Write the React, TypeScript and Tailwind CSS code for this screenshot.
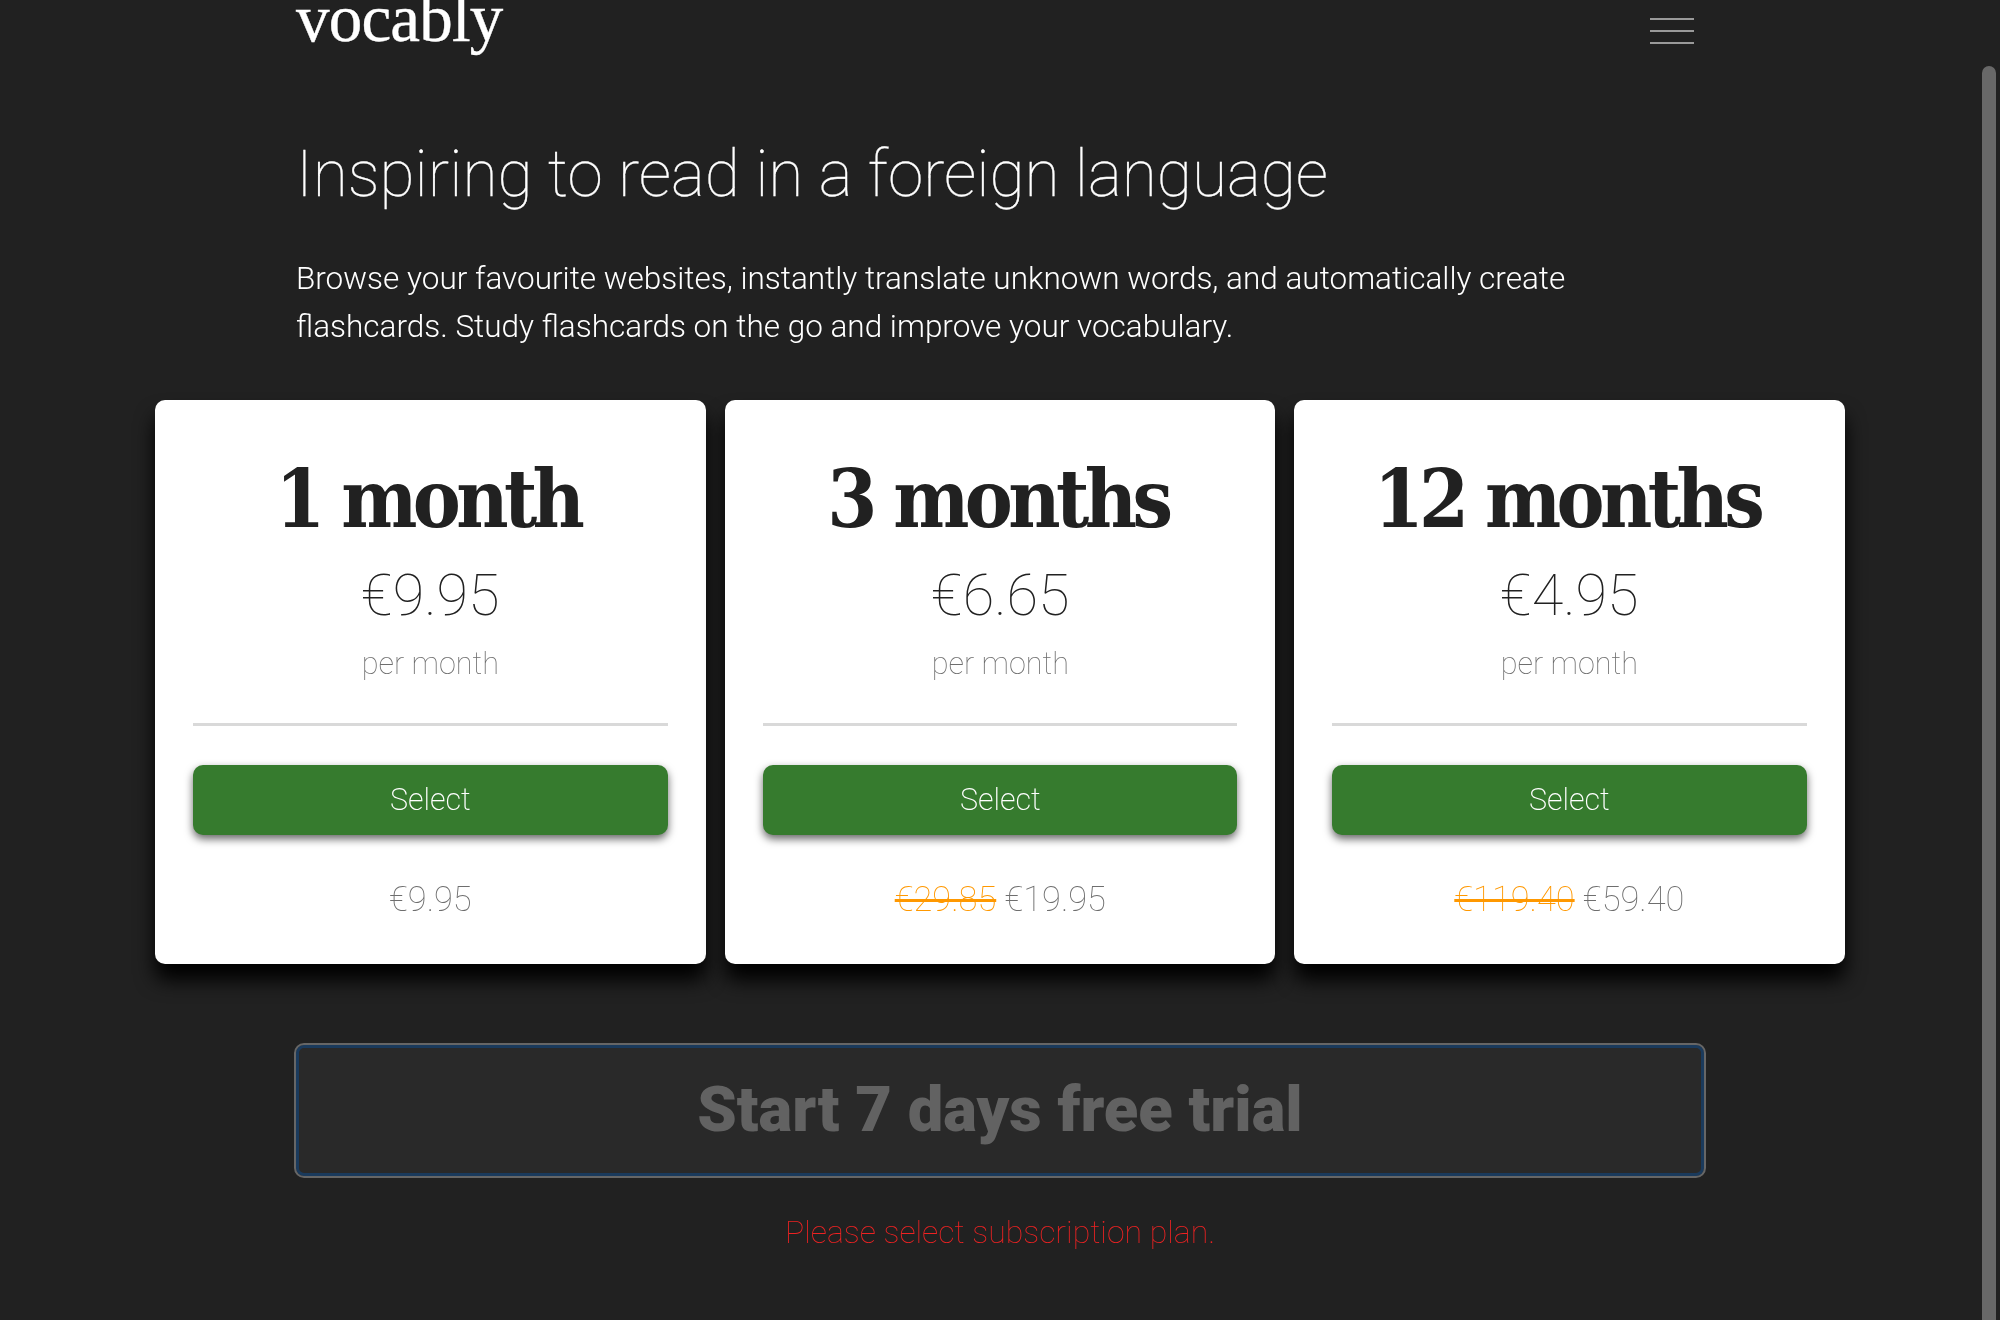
import React from 'react';

interface Plan {
  title: string;
  price: string;
  oldTotal?: string;
  total: string;
}

const plans: Plan[] = [
  { title: '1 month', price: '€9.95', total: '€9.95' },
  { title: '3 months', price: '€6.65', oldTotal: '€29.85', total: '€19.95' },
  { title: '12 months', price: '€4.95', oldTotal: '€119.40', total: '€59.40' },
];

const PlanCard: React.FC<{ plan: Plan }> = ({ plan }) => (
  <div className="flex-1 h-[564px] bg-white rounded-[10px] px-[38px] shadow-[0_16px_20px_#000] text-center">
    <h2 className="mt-[54px] pr-[5px] h-[90px] text-[80px] leading-[90px] font-bold text-[#212121] font-['DejaVu_Serif_Condensed',serif] tracking-[-4.6px] will-change-transform">
      {plan.title}
    </h2>
    <div className="mt-[17px] h-[70px] text-[57.6px] leading-[70px] font-thin text-[#212121] will-change-transform">{plan.price}</div>
    <div className="mt-[11px] h-[44px] text-[30.6px] leading-[44px] font-thin text-[#6e6e6e] will-change-transform">per month</div>
    <div className="mt-[37px] h-[3px] bg-[#d9d9d9]" />
    <button className="mt-[39px] block w-full h-[70px] rounded-[10px] bg-[#367b2e] text-white text-[30.5px] font-extralight shadow-[0_4px_8px_rgba(0,0,0,0.6)]">
      <span className="block will-change-transform">Select</span>
    </button>
    <div className="mt-[42px] h-[44px] text-[34.4px] leading-[44px] font-thin text-[#6e6e6e] will-change-transform">
      {plan.oldTotal && <span className="text-[#ff9800] line-through">{plan.oldTotal}</span>}
      {plan.oldTotal && ' '}
      {plan.total}
    </div>
  </div>
);

const App: React.FC = () => {
  return (
    <div className="relative w-[2000px] h-[1320px] overflow-hidden bg-[#212121] font-['Roboto',sans-serif]">
      <div className="absolute right-[4px] top-[66px] bottom-0 w-[14px] rounded-t-full bg-[#686868]" />

      <header className="ml-[296px] mr-[306px] h-[60px] flex justify-between items-start">
        <div className="-mt-[12px] text-[67px] leading-[60px] tracking-[-0.8px] text-white font-['Liberation_Serif',serif] [-webkit-text-stroke:0.4px_white] will-change-transform">
          vocably
        </div>
        <div className="mt-[18px] w-[44px] flex flex-col gap-[10px]">
          <span className="block h-[2px] bg-[#9a9a9a]" />
          <span className="block h-[2px] bg-[#9a9a9a]" />
          <span className="block h-[2px] bg-[#9a9a9a]" />
        </div>
      </header>

      <h1 className="ml-[296px] mt-[75px] text-[64px] leading-[80px] font-thin text-white [-webkit-text-stroke:0.3px_white] will-change-transform">
        Inspiring to read in a foreign language
      </h1>
      <p className="ml-[296px] mt-[40px] w-[1320px] text-[31.5px] leading-[48px] font-light text-white will-change-transform">
        Browse your favourite websites, instantly translate unknown words, and automatically create flashcards. Study flashcards on the go and improve your vocabulary.
      </p>

      <div className="ml-[155px] mt-[49px] w-[1690px] flex gap-[19px]">
        {plans.map((plan) => (
          <PlanCard key={plan.title} plan={plan} />
        ))}
      </div>

      <button className="ml-[294px] mt-[79px] block w-[1412px] h-[135px] rounded-[10px] border-2 border-[#666] bg-[#292929] text-[63.3px] font-black text-[#626262] shadow-[inset_0_0_0_3px_#1a3a5c]">
        <span className="block -mt-[2px] will-change-transform">Start 7 days free trial</span>
      </button>
      <div className="mt-[32px] text-center text-[32px] leading-[44px] font-thin text-[#ee2222] will-change-transform">
        Please select subscription plan.
      </div>
    </div>
  );
};

export default App;
